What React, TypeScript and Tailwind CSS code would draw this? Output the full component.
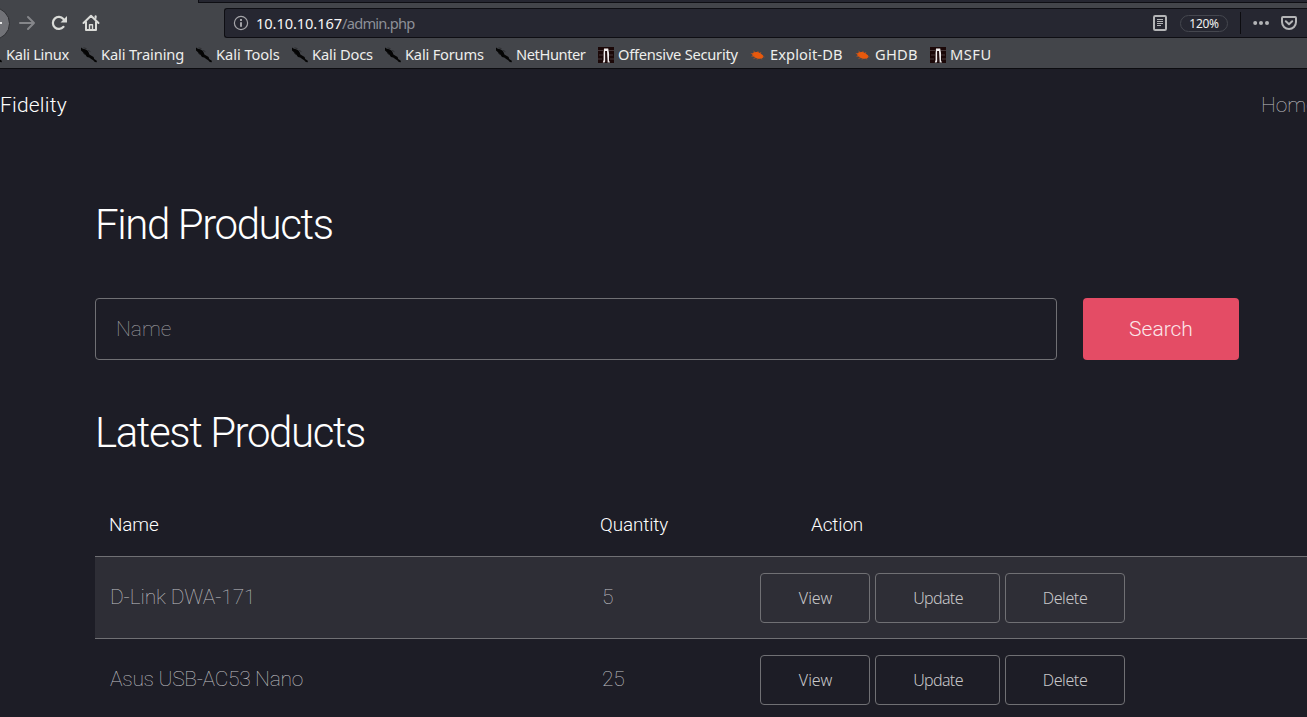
import React from "react";

type BookmarkKind = "kali" | "offsec" | "bug";

function KaliIcon() {
  return (
    <svg width="16" height="16" viewBox="0 0 16 16" className="shrink-0">
      <path d="M0 0.4L1.8 1.8L4 2.2L6.4 3.6L7.6 5.2L8.4 7.6L10.5 8.8L12.6 10L13.2 12L15.8 13.8V15.2L13.8 15L12.2 13.2L10.2 12L8.2 10.4L6 10L4.4 7.8L2.8 6.2L1.2 4.4L0 3.4Z" fill="#050505" />
      <path d="M2.5 0.8L5.5 1.6M7 3.4L9.4 4.6M2 6L4 8" stroke="#27282b" strokeWidth="0.8" fill="none" />
    </svg>
  );
}

function OffsecIcon() {
  return (
    <svg width="16" height="16" viewBox="0 0 16 16" className="shrink-0">
      <rect width="16" height="16" fill="#1b0808" />
      <path d="M0 3.5H5M1 8H5M11 3.5H16M11 8H15M0 12H4M12 12H16" stroke="#71666a" strokeWidth="1.2" opacity="0.5" />
      <path d="M6 1.5H10.2L11 6V13.5L12 15.5H9.6L9 4H7.2L7.4 14L6.6 15.5H4.8L5.6 13V6Z" fill="#f2eeee" />
      <path d="M7.4 4H8.8L9.2 15H7.4Z" fill="#241012" />
    </svg>
  );
}

function BugIcon() {
  return (
    <svg width="16" height="16" viewBox="0 0 16 16" className="shrink-0">
      <path d="M2.4 6.2C4.4 4.4 8 4.6 10.4 6.2L13.2 8.6L12.8 11C10.3 12.4 7 11.8 5 10.4L2.2 8.3Z" fill="#e9590c" />
      <path d="M0.8 6.4L4 7.2M1.5 9.4L5 9M3.4 4L6 6M7.8 4L8.4 6M10.8 5L10.4 7M3.5 11.6L6 10.5M7 12.6L8 11.5M11.8 12.4L11 11M12.5 9.4L14.4 10" stroke="#c95417" strokeWidth="0.7" />
    </svg>
  );
}

const bookmarks: { label: string; kind: BookmarkKind; width: string; tracking: string }[] = [
  { label: "Kali Linux", kind: "kali", width: "w-[95px]", tracking: "tracking-[-0.3px]" },
  { label: "Kali Training", kind: "kali", width: "w-[115px]", tracking: "tracking-[-0.12px]" },
  { label: "Kali Tools", kind: "kali", width: "w-[96px]", tracking: "tracking-[-0.05px]" },
  { label: "Kali Docs", kind: "kali", width: "w-[93px]", tracking: "tracking-[-0.15px]" },
  { label: "Kali Forums", kind: "kali", width: "w-[111px]", tracking: "tracking-[-0.2px]" },
  { label: "NetHunter", kind: "kali", width: "w-[102px]", tracking: "tracking-[-0.42px]" },
  { label: "Offensive Security", kind: "offsec", width: "w-[152px]", tracking: "tracking-[-0.25px]" },
  { label: "Exploit-DB", kind: "bug", width: "w-[105px]", tracking: "tracking-[0.1px]" },
  { label: "GHDB", kind: "bug", width: "w-[75px]", tracking: "tracking-[0.25px]" },
  { label: "MSFU", kind: "offsec", width: "w-[75px]", tracking: "tracking-[0.5px]" },
];

const products = [
  { name: "D-Link DWA-171", quantity: 5, row: "h-[82px] bg-[#2e2e36] border-b border-[#707074]", tracking: "tracking-[-0.12px]" },
  { name: "Asus USB-AC53 Nano", quantity: 25, row: "h-[82px]", tracking: "tracking-[-0.3px]" },
];

function Toolbar() {
  return (
    <div className="flex h-[35px] pt-[5px]">
      <div className="flex h-[30px] w-[224px] shrink-0 items-center">
        <div className="-ml-[23px] flex h-[33px] w-[33px] shrink-0 items-center justify-end rounded-full border border-[#2c2d31] bg-[#717277] pr-[7px]">
          <div className="h-[2px] w-[12px] bg-[#e8e8e8]" />
        </div>
        <svg width="18" height="16" viewBox="0 0 18 16" className="ml-[8px]" fill="none" stroke="#85868a" strokeWidth="2" strokeLinecap="round" strokeLinejoin="round">
          <path d="M2 8H16M10 2L16 8L10 14" />
        </svg>
        <svg width="16" height="16" viewBox="0 0 16 16" className="ml-[15px]" fill="none">
          <path d="M12.5 11.8A6 6 0 1 1 12.4 4" stroke="#dadbd8" strokeWidth="2.2" strokeLinecap="round" />
          <path d="M16 1V7.5H9.5Z" fill="#dadbd8" />
        </svg>
        <svg width="18" height="18" viewBox="0 0 18 18" className="ml-[15px]" fill="none" stroke="#dadbd8" strokeWidth="2" strokeLinejoin="round" strokeLinecap="round">
          <path d="M1.5 9L9 1.7L16.5 9M4 8V16H14V8" />
          <path d="M13.6 2.2V4" />
          <path d="M7.5 15.5V10.8H10.5V15.5" strokeWidth="1.4" />
        </svg>
      </div>
      <div className="flex h-[30px] flex-1 items-center rounded-l-[3px] border border-r-0 border-[#0e0e13] bg-[#262731] font-['Noto_Sans','Open_Sans',sans-serif]">
        <svg width="16" height="16" viewBox="0 0 16 16" className="ml-[8px] shrink-0" fill="none" stroke="#a4a4a8" strokeWidth="1.2">
          <circle cx="8" cy="8" r="6.6" />
          <path d="M8 7.2V11.7" strokeWidth="2" />
          <path d="M8 4V6" strokeWidth="2" />
        </svg>
        <div className="ml-[7px] flex-1 whitespace-nowrap text-[14.67px] leading-[28px] text-[#f5f5f6]">
          <span className="tracking-[-0.1px]">10.10.10.167</span><span className="tracking-[-0.78px] text-[#8d9097]">/admin.php</span>
        </div>
        <svg width="14" height="16" viewBox="0 0 14 16" className="shrink-0" fill="none" stroke="#b4b5b7">
          <rect x="1" y="1" width="12" height="14" rx="1.2" strokeWidth="2" />
          <path d="M4 4.5H10M4 6.5H10M4 8.5H10M4 10.5H8" strokeWidth="1" />
        </svg>
        <div className="ml-[13px] flex h-[17px] w-[48px] shrink-0 items-center justify-center rounded-full border border-[#45474f] pt-[1px] text-[12px] tracking-[-0.3px] text-[#f0f0f0]">120%</div>
        <div className="ml-[12px] h-[22px] w-px bg-[#0c0c10]" />
        <svg width="17" height="6" viewBox="0 0 17 6" className="ml-[12px] shrink-0" fill="#b4b5b7">
          <circle cx="2.2" cy="3" r="2" />
          <circle cx="8" cy="3" r="2" />
          <circle cx="14" cy="3" r="2" />
        </svg>
        <svg width="16" height="14" viewBox="0 0 16 14" className="ml-[11px] mr-[10px] shrink-0" fill="none" stroke="#b4b5b7" strokeWidth="2" strokeLinecap="round" strokeLinejoin="round">
          <path d="M2 1H14A1 1 0 0 1 15 2V6A7 7 0 0 1 1 6V2A1 1 0 0 1 2 1Z" />
          <path d="M4.8 5.2L8 8.2L11.2 5.2" />
        </svg>
      </div>
    </div>
  );
}

function ActionButton({ label, style }: { label: string; style: string }) {
  return (
    <button className={`flex h-[50px] shrink-0 items-center justify-center rounded-[4px] border border-[#707074] font-['Noto_Sans',sans-serif] text-[16px] font-light text-[#c8c8ca] ${style}`}>
      {label}
    </button>
  );
}

export default function App() {
  return (
    <div className="flex h-[717px] w-[1307px] flex-col overflow-hidden bg-[#1d1d26] font-['Roboto',sans-serif]">
      <header className="h-[69px] shrink-0 border-b border-[#0c0c10] bg-[#43454a]">
        <div className="flex h-[3px] justify-end">
          <div className="w-[1109px] border-b border-l border-[#0e0e13] bg-[#252630]" />
        </div>
        <Toolbar />
        <nav className="-ml-[14px] flex h-[30px] w-[1321px] pt-[2px] font-['Noto_Sans','Open_Sans',sans-serif] text-[14.67px] text-[#eeeeec]">
          {bookmarks.map((b) => (
            <div key={b.label} className={`flex h-[30px] shrink-0 items-center gap-[4px] whitespace-nowrap ${b.width}`}>
              {b.kind === "kali" ? <KaliIcon /> : b.kind === "offsec" ? <OffsecIcon /> : <BugIcon />}
              <span className={`pb-[2px] ${b.tracking}`}>{b.label}</span>
            </div>
          ))}
        </nav>
      </header>

      <div className="flex h-[72px] shrink-0 items-center justify-between whitespace-nowrap pt-[2px] text-[21px]">
        <span className="font-light tracking-[0.2px] text-white">Fidelity</span>
        <span className="w-[46px] font-thin text-[#c0c0c4]">Home</span>
      </div>

      <main className="flex flex-col pl-[95px]">
        <h2 className="mt-[59px] h-[50px] text-[42px] font-light leading-[50px] tracking-[-1.4px] text-white">Find Products</h2>
        <div className="mt-[48px] flex h-[62px] gap-[26px]">
          <div className="flex w-[962px] items-center rounded-[4px] border border-[#707074] pl-[20px] pt-[2px] text-[21px] font-thin text-[#a0a0a4]">Name</div>
          <button className="w-[156px] rounded-[4px] bg-[#e44c65] pt-[2px] text-[21px] font-light text-[#fbe6ea]">Search</button>
        </div>
        <h2 className="mt-[48px] h-[50px] text-[42px] font-light leading-[50px] tracking-[-1.4px] text-white">Latest Products</h2>

        <div className="mt-[35px] flex h-[63px] items-center pt-[1px] text-[18.9px] font-light tracking-[-0.12px] text-white">
          <span className="w-[505px] pl-[14px]">Name</span>
          <span className="w-[211px]">Quantity</span>
          <span>Action</span>
        </div>
        <div className="border-t border-[#707074]">
          {products.map((p) => (
            <div key={p.name} className={`flex text-[21px] font-thin text-[#c0c0c4] ${p.row}`}>
              <span className={`w-[507px] pl-[15px] leading-[80px] ${p.tracking}`}>{p.name}</span>
              <span className="w-[158px] leading-[80px] tracking-[-0.3px]">{p.quantity}</span>
              <div className="mt-[16px] flex gap-[5px]">
                <ActionButton label="View" style="w-[110px] pl-[1px]" />
                <ActionButton label="Update" style="w-[125px] pl-[1px] tracking-[-0.65px]" />
                <ActionButton label="Delete" style="w-[120px] tracking-[-0.4px]" />
              </div>
            </div>
          ))}
        </div>
      </main>
    </div>
  );
}
